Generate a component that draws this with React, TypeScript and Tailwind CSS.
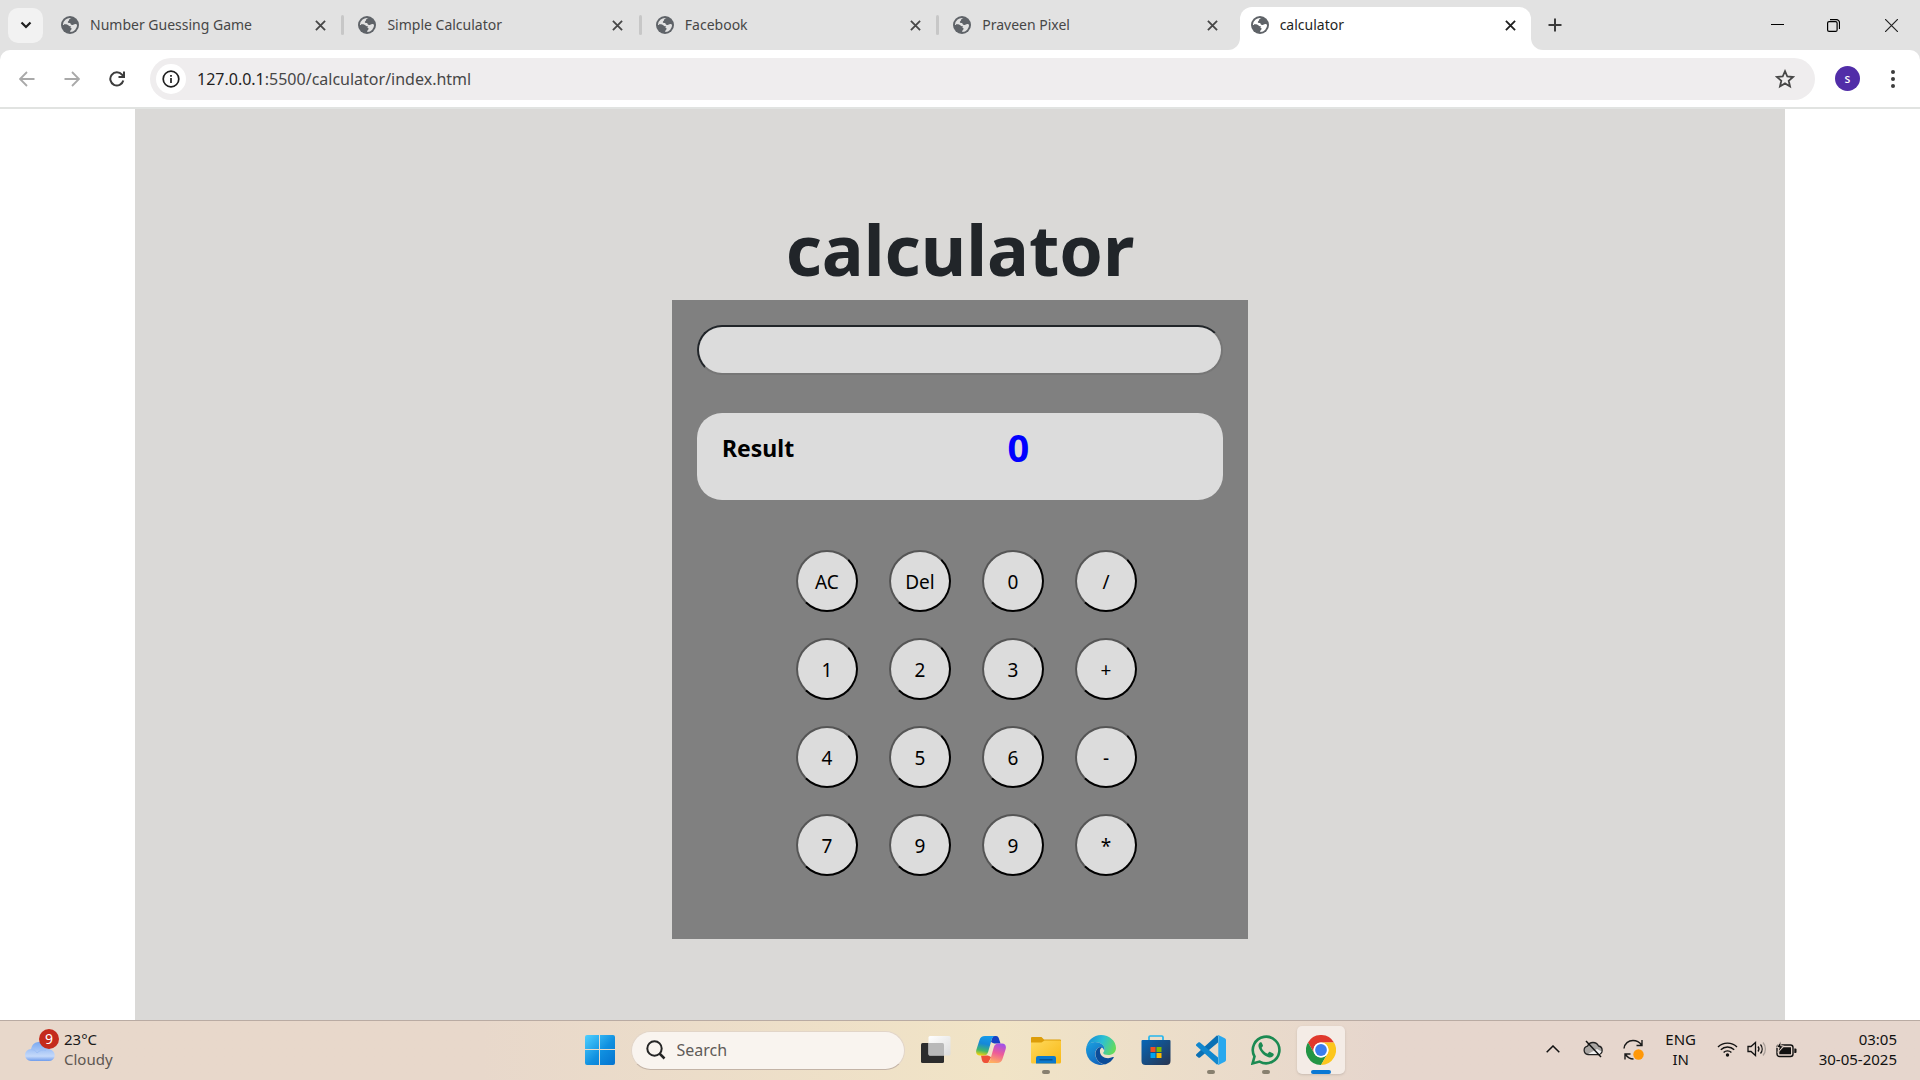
import { useState, type ReactNode } from "react";

const tabs = ["Number Guessing Game", "Simple Calculator", "Facebook", "Praveen Pixel", "calculator"];

const keys = [
  ["AC", "Del", "0", "/"],
  ["1", "2", "3", "+"],
  ["4", "5", "6", "-"],
  ["7", "9", "9", "*"],
];

function Globe({ land }: { land: string }) {
  return (
    <svg viewBox="0 0 18 18" className="size-[18px] shrink-0" aria-hidden="true">
      <circle cx="9" cy="9" r="9" fill="#5f6368" />
      <path
        d="M10.6 2.1C9.4 2.6 8.2 3 8 4.2c-.1.9-1 .8-1.2 1.7-.1.8.9 1 1.7 1 .9 0 1.1.6 1.2 1.2.2.8 1 .9 1.9.8 1-.1 1.5-.9 2.5-1 .9 0 1.5.5 2 .8A7.100 7.100 0 0 1 9.400 16c-.4-.6-.1-1.500.5-2 .8-.7.9-1.500.3-2.100-.6-.6-1.400-.7-2.200-.9-.9-.2-1.300-1-2.100-1.400-1.200-.6-2.600-.8-4-.7A7.100 7.100 0 0 1 10.600 2.100Z"
        fill={land}
      />
      <path d="M3 8.200C4.800 8 6.700 8.400 7.600 9.400c.7.7 1.900.6 2.600 1.200-1 .9-1.600 1.300-1.700 2.300-.1.900-.4 1.500-1 2.100C4.400 14.200 2.600 11.500 3 8.200Z" fill="#5f6368" />
    </svg>
  );
}

function Cross({ className }: { className: string }) {
  return (
    <svg viewBox="0 0 12 12" className={className} fill="none" stroke="currentColor" strokeWidth="2" aria-hidden="true">
      <path d="M1 1l10 10M11 1L1 11" />
    </svg>
  );
}

function Tab({ title, active, divider }: { title: string; active: boolean; divider: boolean }) {
  return (
    <div className="relative flex h-full min-w-0 flex-1 items-center">
      {active && (
        <div className="absolute inset-x-[3px] top-[7px] bottom-0 rounded-t-xl bg-white">
          <div className="absolute bottom-0 -left-3 size-3 bg-white">
            <div className="size-3 rounded-br-xl bg-[#e2e2e2]" />
          </div>
          <div className="absolute -right-3 bottom-0 size-3 bg-white">
            <div className="size-3 rounded-bl-xl bg-[#e2e2e2]" />
          </div>
        </div>
      )}
      <div className="relative flex min-w-0 flex-1 items-center pr-[11px] pl-[14px]">
        <Globe land={active ? "#ffffff" : "#e2e2e2"} />
        <span className={active ? "ml-[11px] flex-1 truncate text-[14px] leading-5 text-[#1f1f1f]" : "ml-[11px] flex-1 truncate text-[14px] leading-5 text-[#474747]"}>
          {title}
        </span>
        <button aria-label={`Close ${title}`} className="flex size-5 items-center justify-center">
          <Cross className={active ? "size-[11px] text-[#1f1f1f]" : "size-[11px] text-[#474747]"} />
        </button>
      </div>
      <div className={divider ? "h-5 w-[3px] shrink-0 rounded-full bg-[#c7c7c7]" : "h-5 w-[3px] shrink-0"} />
    </div>
  );
}

function TabStrip() {
  return (
    <div className="flex h-[50px] items-center bg-[#e2e2e2] pl-2">
      <button aria-label="Search tabs" className="mr-1 flex size-[35px] shrink-0 items-center justify-center rounded-[10px] bg-[#f2f2f2]">
        <svg viewBox="0 0 12 8" className="h-[8px] w-3" fill="none" stroke="#1f1f1f" strokeWidth="2.200" aria-hidden="true">
          <path d="M1.500 1.500L6 6l4.500-4.500" />
        </svg>
      </button>
      <div className="flex h-full max-w-[1487px] min-w-0 flex-1">
        {tabs.map((t, i) => (
          <Tab key={t} title={t} active={i === 4} divider={i < 4 - 0 && i !== 3 ? true : i === 3 ? false : false} />
        ))}
      </div>
      <button aria-label="New tab" className="ml-[9px] flex size-[24px] shrink-0 items-center justify-center">
        <svg viewBox="0 0 14 14" className="size-[14px]" stroke="#3c3c3c" strokeWidth="2" aria-hidden="true">
          <path d="M7 0.500v13M0.500 7h13" />
        </svg>
      </button>
      <div className="ml-auto flex shrink-0">
        <button aria-label="Minimize" className="flex h-10 w-14 items-center justify-center">
          <svg viewBox="0 0 13 13" className="size-[13px]" stroke="#000" aria-hidden="true">
            <path d="M0 5.500h13" />
          </svg>
        </button>
        <button aria-label="Restore" className="flex h-10 w-[57px] items-center justify-center">
          <svg viewBox="0 0 13 13" className="size-[13px]" fill="none" stroke="#000" strokeWidth="1.200" aria-hidden="true">
            <rect x="0.600" y="2.600" width="9.500" height="9.800" rx="1.500" />
            <path d="M3 0.700h6.500a3 3 0 0 1 3 3V10" />
          </svg>
        </button>
        <button aria-label="Close window" className="flex h-10 w-[58px] items-center justify-center">
          <svg viewBox="0 0 13 13" className="size-[13px]" stroke="#222" strokeWidth="1.200" aria-hidden="true">
            <path d="M0 0l13 13M13 0L0 13" />
          </svg>
        </button>
      </div>
    </div>
  );
}

function Toolbar() {
  return (
    <div className="bg-[#e2e2e2]">
      <div className="flex h-[59px] items-center rounded-t-[10px] border-b-2 border-[#e1e3e1] bg-white pr-[15px] pl-[15px]">
        <button aria-label="Back" className="flex size-6 items-center justify-center">
          <svg viewBox="0 0 16 16" className="size-4" fill="none" stroke="#a9a9a9" strokeWidth="1.800" aria-hidden="true">
            <path d="M15.500 8H1.500M8 1L1 8l7 7" />
          </svg>
        </button>
        <button aria-label="Forward" className="ml-[21px] flex size-6 items-center justify-center">
          <svg viewBox="0 0 16 16" className="size-4" fill="none" stroke="#a9a9a9" strokeWidth="1.800" aria-hidden="true">
            <path d="M0.500 8h14M8 1l7 7-7 7" />
          </svg>
        </button>
        <button aria-label="Reload" className="ml-[21px] flex size-6 items-center justify-center">
          <svg viewBox="0 0 16 16" className="size-4" fill="none" stroke="#3c3c3c" strokeWidth="2" aria-hidden="true">
            <path d="M14.300 9.500A6.600 6.600 0 1 1 13 3.700L14.500 5.500" />
            <path d="M15 0.500V6H9.500" />
          </svg>
        </button>
        <div className="ml-[21px] flex h-[42px] min-w-0 flex-1 items-center rounded-full bg-[#efedee] pr-[19px] pl-[6px]">
          <button aria-label="View site information" className="flex size-[30px] shrink-0 items-center justify-center rounded-full bg-white">
            <svg viewBox="0 0 18 18" className="size-[18px]" fill="none" stroke="#1f1f1f" strokeWidth="1.700" aria-hidden="true">
              <circle cx="9" cy="9" r="7.800" />
              <path d="M9 8v5M9 5v1.700" />
            </svg>
          </button>
          <a href="#calculator" className="ml-[11px] min-w-0 flex-1 truncate text-[16px] leading-6 text-[#474747]">
            <span className="text-[#1f1f1f]">127.0.0.1</span>:5500/calculator/index.html
          </a>
          <button aria-label="Bookmark this tab" className="flex size-[22px] items-center justify-center">
            <svg viewBox="0 0 20 20" className="size-5" fill="none" stroke="#474747" strokeWidth="1.800" aria-hidden="true">
              <path d="M10 2.200l2.300 5.300 5.700.5-4.300 3.800 1.300 5.600L10 14.400l-5 3 1.300-5.600L2 8l5.700-.5z" />
            </svg>
          </button>
        </div>
        <button aria-label="Profile" className="ml-5 flex size-[25px] items-center justify-center rounded-full bg-[#512da8] text-[12px] font-medium text-white">
          s
        </button>
        <button aria-label="Menu" className="ml-[21px] flex size-6 items-center justify-center">
          <svg viewBox="0 0 4 20" className="h-5 w-1" fill="#3c3c3c" aria-hidden="true">
            <circle cx="2" cy="3" r="2" />
            <circle cx="2" cy="10" r="2" />
            <circle cx="2" cy="17" r="2" />
          </svg>
        </button>
      </div>
    </div>
  );
}

function Calculator() {
  const [expression, setExpression] = useState("");

  const press = (key: string) => {
    if (key === "AC") setExpression("");
    else if (key === "Del") setExpression((e) => e.slice(0, -1));
    else setExpression((e) => e + key);
  };

  return (
    <main id="calculator" className="mx-[135px] flex flex-1 flex-col items-center bg-[#dad9d7] pt-24">
      <h1 className="text-[70px] leading-[88px] font-bold text-[#212529]">calculator</h1>
      <section className="mt-[7px] flex w-[576px] flex-col bg-[#808080] px-[25px] pt-[25px] pb-[63px]">
        <input
          aria-label="Expression"
          value={expression}
          onChange={(e) => setExpression(e.target.value)}
          className="h-[50px] rounded-[25px] border-2 border-t-[#212529] border-r-[#767676] border-b-[#767676] border-l-[#212529] bg-[#dcdcdc] px-6 text-xl text-black outline-none"
        />
        <div className="mt-[38px] grid h-[87px] grid-cols-[3fr_2fr] rounded-[25px] bg-[#dcdcdc] px-[25px] pt-[10px] font-bold">
          <h2 className="text-[23px] leading-[50px] text-black">Result</h2>
          <output className="text-[38px] leading-[48px] text-[#0000ff]">0</output>
        </div>
        <div className="mt-[50px] ml-[99px] flex flex-col gap-[26px]">
          {keys.map((row, r) => (
            <div key={r} className="flex gap-[31px]">
              {row.map((k, c) => (
                <button
                  key={c}
                  onClick={() => press(k)}
                  className="size-[62px] rounded-full border-2 border-t-[#555] border-r-black border-b-black border-l-[#555] bg-[#dcdcdc] pt-0.5 text-[19px] text-black"
                >
                  {k}
                </button>
              ))}
            </div>
          ))}
        </div>
      </section>
    </main>
  );
}

function AppButton({ label, running, children }: { label: string; running?: boolean; children: ReactNode }) {
  return (
    <button aria-label={label} className="relative flex size-12 items-center justify-center">
      {children}
      {running && <span className="absolute bottom-0 h-1 w-2 rounded-full bg-[#88806f]" />}
    </button>
  );
}

function WindowsLogo() {
  return (
    <svg viewBox="0 0 30 30" className="size-[30px]" aria-hidden="true">
      <defs>
        <linearGradient id="win" x1="0" y1="0" x2="1" y2="1">
          <stop offset="0" stopColor="#4fd0ff" />
          <stop offset="0.550" stopColor="#1090e0" />
          <stop offset="1" stopColor="#0573cf" />
        </linearGradient>
      </defs>
      <path d="M2 0h12v14H0V2a2 2 0 0 1 2-2zM15 0h13a2 2 0 0 1 2 2v12H15zM0 15h14v15H2a2 2 0 0 1-2-2zM15 15h15v13a2 2 0 0 1-2 2H15z" fill="url(#win)" />
    </svg>
  );
}

function TaskView() {
  return (
    <svg viewBox="0 0 30 30" className="size-[30px]" aria-hidden="true">
      <defs>
        <linearGradient id="tv" x1="0" y1="0" x2="1" y2="1">
          <stop offset="0" stopColor="#fff" />
          <stop offset="1" stopColor="#dcdcdc" />
        </linearGradient>
      </defs>
      <rect x="0" y="8" width="23" height="20" rx="1.500" fill="#2c2c2c" />
      <rect x="7.500" y="1" width="22" height="19.500" rx="1.500" fill="url(#tv)" />
      <path d="M7.500 8H21.500a1.500 1.500 0 0 1 1.500 1.500v11H9a1.500 1.500 0 0 1-1.500-1.500z" fill="#b9b9b9" />
    </svg>
  );
}

function Copilot() {
  return (
    <svg viewBox="0 0 30 30" className="size-[30px]" aria-hidden="true">
      <defs>
        <linearGradient id="cp1" x1="0.500" y1="0" x2="0.300" y2="1">
          <stop offset="0" stopColor="#169bea" />
          <stop offset="0.400" stopColor="#1688d8" />
          <stop offset="0.750" stopColor="#43b66b" />
          <stop offset="1" stopColor="#f2d20b" />
        </linearGradient>
        <linearGradient id="cp2" x1="0.700" y1="0" x2="0.400" y2="1">
          <stop offset="0" stopColor="#a050ea" />
          <stop offset="0.500" stopColor="#ee5c98" />
          <stop offset="1" stopColor="#ffb060" />
        </linearGradient>
      </defs>
      <path d="M17 1h3c2 0 2.600 1.500 3.200 3.500L24.500 8.600H20c-2.500 0-4-.5-5-2z" fill="#1541c5" />
      <path d="M12 28H9c-2 0-2.600-1.500-3.200-3.500L5 20.400h5c2.500 0 4 .5 5 2z" fill="#ee5138" />
      <path d="M9 1h10c-2 .3-2.800 1.600-3.400 3.700l-3.400 12c-.8 2.700-2.200 3.800-4.700 3.800H4c-3 0-4.500-2-3.700-5.500L3.500 5C4.300 2.300 6 1 9 1z" fill="url(#cp1)" />
      <path d="M21 28H11c2-.3 2.800-1.600 3.400-3.700l3.400-12C18.600 9.600 20 8.500 22.500 8.500H26c3 0 4.500 2 3.700 5.500L26.500 24c-.8 2.700-2.500 4-5.500 4z" fill="url(#cp2)" />
    </svg>
  );
}

function Explorer() {
  return (
    <svg viewBox="0 0 30 30" className="size-[30px]" aria-hidden="true">
      <defs>
        <linearGradient id="fold" x1="0" y1="0" x2="1" y2="1">
          <stop offset="0" stopColor="#ffd95c" />
          <stop offset="1" stopColor="#f8b815" />
        </linearGradient>
      </defs>
      <path d="M1 2h9.500l2.500 2.500h16a1 1 0 0 1 1 1V10H0V3a1 1 0 0 1 1-1z" fill="#dd9d09" />
      <path d="M0 7.500h10.500l3-2H29a1 1 0 0 1 1 1V27a1.500 1.500 0 0 1-1.500 1.500h-27A1.500 1.500 0 0 1 0 27z" fill="url(#fold)" />
      <path d="M5 28.500V23a2 2 0 0 1 2-2h16a2 2 0 0 1 2 2v5.500z" fill="#0c79cc" />
      <path d="M8.500 24.800h13" stroke="#074b87" strokeWidth="1.200" />
    </svg>
  );
}

function Edge() {
  return (
    <svg viewBox="0 0 30 30" className="size-[30px]" aria-hidden="true">
      <defs>
        <linearGradient id="e1" x1="0" y1="0.300" x2="1" y2="0.600">
          <stop offset="0" stopColor="#168bd8" />
          <stop offset="0.500" stopColor="#2cc0d3" />
          <stop offset="1" stopColor="#66dc57" />
        </linearGradient>
        <linearGradient id="e2" x1="0" y1="0" x2="0.600" y2="1">
          <stop offset="0" stopColor="#1ba2e0" />
          <stop offset="1" stopColor="#1265bd" />
        </linearGradient>
      </defs>
      <path d="M.3 13C1.400 5.500 7.600 0 15 0c8.400 0 15 6 15 13 0 4.600-3.600 7-7.600 7-3.300 0-5.200-1-5.200-2 0-.8 1.300-1.300 1.300-3.700C18.500 10 14 7 9 7 4.600 7 1.500 10 .3 13z" fill="url(#e1)" />
      <path d="M0 15C0 10 4 7 9 7c5 0 9.500 3 9.500 7.300l-.3 1.500C17.600 13.500 16 12 14 12c-3.800 1-5.600 5-4.500 9 1 4.500 5 8.700 10 8.300A15 15 0 0 1 0 15z" fill="url(#e2)" />
      <path d="M14 12c-4 1.500-5.400 5.600-4 10 1.500 4.700 5.800 7.700 9.800 7.200 3.400-1.100 6.200-3.500 7.900-6.400.3-.6-.2-1-.8-.7-6.300 3-13-.3-13-6.100 0-1.900 1-3.400 2.500-3.600z" fill="#0b4c99" />
    </svg>
  );
}

function Store() {
  return (
    <svg viewBox="0 0 30 30" className="size-[30px]" aria-hidden="true">
      <defs>
        <linearGradient id="st" x1="0" y1="0" x2="1" y2="1">
          <stop offset="0" stopColor="#0667b8" />
          <stop offset="1" stopColor="#28344f" />
        </linearGradient>
      </defs>
      <path d="M8 6.500V2.200A1.200 1.200 0 0 1 9.200 1h11.600A1.200 1.200 0 0 1 22 2.200v4.300" fill="none" stroke="#24b6ee" strokeWidth="1.700" />
      <path d="M1.500 5h27a1 1 0 0 1 1 1v20a4 4 0 0 1-4 4h-21a4 4 0 0 1-4-4V6a1 1 0 0 1 1-1z" fill="url(#st)" />
      <path d="M9.500 12h5v5h-5z" fill="#f25022" />
      <path d="M15.500 12h5v5h-5z" fill="#7fba00" />
      <path d="M9.500 18h5v5h-5z" fill="#00a4ef" />
      <path d="M15.500 18h5v5h-5z" fill="#ffb900" />
    </svg>
  );
}

function VSCode() {
  return (
    <svg viewBox="0 0 30 30" className="size-[30px]" aria-hidden="true">
      <path d="M22 7.500L4 22.500c-.5.400-1.200.4-1.700 0L.5 20.900a1.200 1.200 0 0 1 0-1.800L20.800.6 22 1z" fill="#0b70b4" />
      <path d="M22 22.500L4 7.500c-.5-.4-1.200-.4-1.700 0L.5 9.100a1.200 1.200 0 0 0 0 1.800l20.300 18.500L22 29z" fill="#1187ce" />
      <path d="M20.800 29.600c.7.500 1.300.4 2 .1l6-2.900c.8-.4 1.200-1 1.200-1.800V5c0-.8-.4-1.400-1.200-1.800l-6-2.900c-.7-.3-1.300-.4-2 .1.700-.4 1.500 0 1.500.9v27.400c0 .9-.8 1.300-1.500.9z" fill="#29a8ee" />
    </svg>
  );
}

function WhatsApp() {
  return (
    <svg viewBox="0 0 30 30" className="size-[30px]" aria-hidden="true">
      <path d="M1.600 28.400l1.900-6.900A13.300 13.300 0 1 1 8.600 26.600z" fill="none" stroke="#1b8a52" strokeWidth="2.600" />
      <path d="M10.600 7.600c-.5-.6-1.300-.5-1.800 0-1.400 1.400-1.600 3-1.100 4.700 1.500 4.700 5.200 8.500 9.800 9.900 2 .6 3.900.1 5-1.700.4-.8.400-1.500-.3-1.900l-3-1.600c-.7-.3-1.200-.1-1.600.5l-1 1.200c-2.900-1.100-5-3.200-6-5.900l1-1.200c.4-.5.4-1 .2-1.500z" fill="#1b8a52" />
    </svg>
  );
}

function Chrome() {
  return (
    <svg viewBox="0 0 30 30" className="size-[30px]" aria-hidden="true">
      <path d="M2 7.500A15 15 0 0 1 28 7.500H15A7.500 7.500 0 0 0 8.500 18.750z" fill="#e0382c" />
      <path d="M2 7.500A15 15 0 0 0 15 30l6.500-11.250a7.500 7.500 0 0 1-13 0z" fill="#239545" />
      <path d="M28 7.500A15 15 0 0 1 15 30l6.500-11.250A7.500 7.500 0 0 0 15 7.500z" fill="#fcc61c" />
      <circle cx="15" cy="15" r="7.500" fill="#fff" />
      <circle cx="15" cy="15" r="5.900" fill="#3b7ded" />
    </svg>
  );
}

function Taskbar() {
  return (
    <footer className="grid h-[60px] grid-cols-[1fr_auto_1fr] items-center border-t border-[#b9aba3] bg-linear-to-r from-[#e8d8cb] from-25% via-[#f1e4c6] via-52% to-[#e6d6cd] to-72%">
      <button className="flex items-center gap-[9px] pb-[3px] pl-[25px] text-left">
        <span className="relative">
          <svg viewBox="0 0 30 20" className="mt-1 h-5 w-[30px]" aria-hidden="true">
            <defs>
              <linearGradient id="cl" x1="0" y1="0" x2="0" y2="1">
                <stop offset="0" stopColor="#79a8f0" />
                <stop offset="0.750" stopColor="#c5d9fa" />
                <stop offset="1" stopColor="#6e9cec" />
              </linearGradient>
            </defs>
            <path d="M6 8a8.500 8.500 0 0 1 16-2.500l3 3a5.800 5.800 0 0 1-1 11.500H6A6 6 0 0 1 6 8z" fill="url(#cl)" />
            <path d="M6 8.500c3 0 5 1.500 6 3.500 2-2.500 6-3.500 9-2.500" fill="none" stroke="#9dbff5" />
          </svg>
          <span className="absolute -top-2 right-[-4px] flex size-5 items-center justify-center rounded-full bg-[#c42b1c] text-[14px] leading-5 text-white">9</span>
        </span>
        <span className="flex flex-col text-[15px] leading-5">
          <span className="text-[#1a1a1a]">23°C</span>
          <span className="text-[#5d5751]">Cloudy</span>
        </span>
      </button>

      <div className="flex items-center gap-[7px] pb-px">
        <AppButton label="Start"><WindowsLogo /></AppButton>
        <label className="flex h-[39px] w-[274px] items-center rounded-full border border-[#e2d5c8] border-b-[#c3b3a6] bg-[#f9f4ef] pl-[14px]">
          <svg viewBox="0 0 20 20" className="size-5" fill="none" stroke="#252525" strokeWidth="2" aria-hidden="true">
            <circle cx="8.500" cy="8.500" r="7.200" />
            <path d="M13.500 13.500l5 5" strokeWidth="2.500" />
          </svg>
          <input aria-label="Search" placeholder="Search" className="ml-[11px] w-40 bg-transparent text-[16px] leading-6 outline-none placeholder:text-[#5f5b58]" />
        </label>
        <AppButton label="Task view"><TaskView /></AppButton>
        <AppButton label="Copilot"><Copilot /></AppButton>
        <AppButton label="File Explorer" running><Explorer /></AppButton>
        <AppButton label="Microsoft Edge"><Edge /></AppButton>
        <AppButton label="Microsoft Store"><Store /></AppButton>
        <AppButton label="Visual Studio Code" running><VSCode /></AppButton>
        <AppButton label="WhatsApp" running><WhatsApp /></AppButton>
        <button aria-label="Google Chrome" className="relative flex size-12 items-center justify-center rounded-[5px] bg-[#f4ece6] shadow-sm">
          <Chrome />
          <span className="absolute bottom-0 h-1 w-5 rounded-full bg-[#0a78d4]" />
        </button>
      </div>

      <div className="flex items-center justify-end pr-[23px] pb-[3px] text-[#111]">
        <button aria-label="Show hidden icons" className="flex w-5 justify-center">
          <svg viewBox="0 0 14 8" className="h-2 w-[14px]" fill="none" stroke="#111" strokeWidth="1.500" aria-hidden="true">
            <path d="M0.700 7.300L7 1l6.300 6.300" />
          </svg>
        </button>
        <button aria-label="OneDrive" className="ml-5 flex w-5 justify-center">
          <svg viewBox="0 0 20 18" className="h-[18px] w-5" fill="none" stroke="#222" strokeWidth="1.300" aria-hidden="true">
            <path d="M5 14.500a4.200 4.200 0 0 1-.5-8.300A6 6 0 0 1 15.500 6a4.300 4.300 0 0 1 0 8.500z" fill="#a9a5a2" />
            <path d="M5 14l9-5 4.500 2.500-2 2.500z" fill="#f0f0f0" stroke="none" />
            <path d="M3 1l15 16" stroke="#111" strokeWidth="1.500" />
          </svg>
        </button>
        <button aria-label="Updates" className="ml-5 flex w-[21px] justify-center">
          <svg viewBox="0 0 21 21" className="size-[21px]" fill="none" stroke="#1a1a1a" strokeWidth="1.400" aria-hidden="true">
            <path d="M1 9.500C1.500 4.500 5.500 1.500 10 1.500c3.500 0 6.500 1.500 8.500 4.500M19 1v5.500h-5.500" />
            <path d="M2 20.500V15h5.500M2.500 15.500c2 3 4 4.500 8 4.500" />
            <circle cx="15.500" cy="15.500" r="5.200" fill="#ff9808" stroke="none" />
          </svg>
        </button>
        <button className="ml-[21px] flex w-8 flex-col items-center text-[15px] leading-5">
          <span>ENG</span>
          <span>IN</span>
        </button>
        <button aria-label="Network, volume and battery" className="ml-5 flex items-center gap-[9px]">
          <svg viewBox="0 0 21 16" className="h-4 w-[21px]" fill="none" stroke="#111" strokeWidth="1.400" aria-hidden="true">
            <path d="M1 6a13.500 13.500 0 0 1 19 0M3.800 8.800a9.500 9.500 0 0 1 13.400 0M6.600 11.500a5.500 5.500 0 0 1 7.800 0" />
            <circle cx="10.500" cy="14" r="1.700" fill="#111" stroke="none" />
          </svg>
          <svg viewBox="0 0 20 16" className="h-4 w-5" fill="none" stroke="#111" strokeWidth="1.300" aria-hidden="true">
            <path d="M1 5.500h3L8.500 1.500v13L4 10.500H1z" />
            <path d="M11 5.500a4 4 0 0 1 0 5M13.500 3.500a7 7 0 0 1 0 9" />
            <path d="M16 1.500a10 10 0 0 1 0 13" stroke="#aaa09a" />
          </svg>
          <svg viewBox="0 0 21 17" className="h-[17px] w-[21px]" aria-hidden="true">
            <rect x="1" y="4" width="16" height="11.500" rx="2.500" fill="none" stroke="#111" strokeWidth="1.400" />
            <path d="M7.500 6.300h7.500v7H3.300V10.500z" fill="#111" />
            <path d="M18.300 7.500h1.200a1 1 0 0 1 1 1v2.500a1 1 0 0 1-1 1h-1.200z" fill="#111" />
            <path d="M5 0L0.500 6.500H3.200L2 11.500 7.500 4.800H4.800z" fill="#111" stroke="#e6d6cd" strokeWidth="0.900" />
          </svg>
        </button>
        <button className="ml-[22px] flex flex-col items-end text-[15px] leading-5">
          <span>03:05</span>
          <span>30-05-2025</span>
        </button>
      </div>
    </footer>
  );
}

export default function App() {
  return (
    <div className="flex min-h-screen flex-col bg-white font-['Noto_Sans','Open_Sans',sans-serif]">
      <TabStrip />
      <Toolbar />
      <Calculator />
      <Taskbar />
    </div>
  );
}
